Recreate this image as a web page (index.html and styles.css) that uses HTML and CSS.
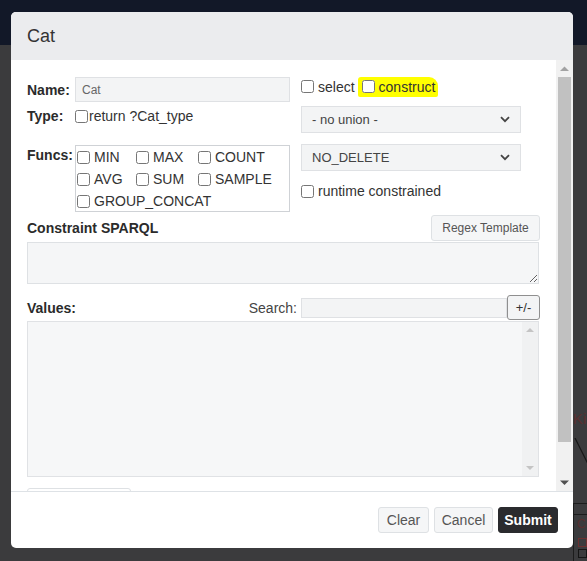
FILE: index.html
```html
<!DOCTYPE html>
<html>
<head>
<meta charset="utf-8">
<link rel="stylesheet" href="styles.css">
</head>
<body>
<div class="topbar"></div>
<div class="backdrop-bits">
  <span class="bg-text">Ki</span>
  <svg class="bg-line" width="20" height="40" viewBox="0 0 20 40"><path d="M1 0 L19 36" stroke="#151515" stroke-width="1.2" fill="none"/></svg>
  <div class="bg-table">
    <div class="bg-row"></div>
    <span class="bg-red">C</span>
    <span class="bg-sq red"></span>
    <span class="bg-sq"></span>
  </div>
</div>

<div class="modal">
  <div class="modal-header"><h2 class="title">Cat</h2></div>
  <div class="modal-body">
    <div class="body-content">
      <div class="top-grid">
        <div class="left-col">
          <div class="name-row">
            <span class="lbl">Name:</span>
            <input class="txt name-input" type="text" value="Cat">
          </div>
          <div class="type-row">
            <span class="lbl">Type:</span>
            <label class="chk tight"><input type="checkbox">return ?Cat_type</label>
          </div>
          <div class="funcs-row">
            <span class="lbl funcs-lbl">Funcs:</span>
            <div class="funcs-box">
              <label class="chk"><input type="checkbox">MIN</label>
              <label class="chk"><input type="checkbox">MAX</label>
              <label class="chk"><input type="checkbox">COUNT</label>
              <label class="chk"><input type="checkbox">AVG</label>
              <label class="chk"><input type="checkbox">SUM</label>
              <label class="chk"><input type="checkbox">SAMPLE</label>
              <label class="chk wide"><input type="checkbox">GROUP_CONCAT</label>
            </div>
          </div>
        </div>
        <div class="right-col">
          <div class="mode-row">
            <label class="chk"><input type="checkbox">select</label>
            <span class="hl"><label class="chk"><input type="checkbox">construct</label></span>
          </div>
          <select class="sel"><option>- no union -</option></select>
          <select class="sel"><option>NO_DELETE</option></select>
          <label class="chk runtime"><input type="checkbox">runtime constrained</label>
        </div>
      </div>

      <div class="section-head">
        <span class="lbl">Constraint SPARQL</span>
        <button class="btn-light regex">Regex Template</button>
      </div>
      <textarea class="sparql"></textarea>

      <div class="values-head">
        <span class="lbl">Values:</span>
        <div class="search">
          <span class="search-lbl">Search:</span>
          <input class="txt search-input" type="text">
          <button class="pm">+/-</button>
        </div>
      </div>
      <div class="values-list">
        <div class="values-items"></div>
        <div class="mini-scroll">
          <svg width="16" height="16" viewBox="0 0 16 16"><path d="M4 10h8L8 6z" fill="#c4c4c4"/></svg>
          <svg width="16" height="16" viewBox="0 0 16 16"><path d="M4 6h8L8 10z" fill="#c4c4c4"/></svg>
        </div>
      </div>
      <button class="btn-light partial">&nbsp;</button>
    </div>
    <div class="vscroll">
      <svg class="sb-btn" width="17" height="17" viewBox="0 0 17 17"><path d="M4 11h9L8.5 6.5z" fill="#a3a3a3"/></svg>
      <div class="sb-track"><div class="sb-thumb"></div></div>
      <svg class="sb-btn" width="17" height="17" viewBox="0 0 17 17"><path d="M4 6.5h9L8.5 11z" fill="#505050"/></svg>
    </div>
  </div>
  <div class="modal-footer">
    <button class="btn-light clear">Clear</button>
    <button class="btn-light cancel">Cancel</button>
    <button class="btn-dark submit">Submit</button>
  </div>
</div>
</body>
</html>
```

FILE: styles.css
```css
html, body {
  margin: 0;
  padding: 0;
}
body {
  width: 587px;
  height: 561px;
  overflow: hidden;
  background: #3b3b3d;
  font-family: "Liberation Sans", Arial, sans-serif;
  font-size: 14px;
  color: #333;
  position: relative;
}
.topbar {
  height: 45px;
  background: #121828;
}

/* page content peeking out behind the backdrop */
.backdrop-bits {
  position: absolute;
  left: 573px;
  top: 400px;
  width: 14px;
  height: 161px;
}
.bg-text {
  position: absolute;
  left: 0;
  top: 10px;
  font-size: 15px;
  color: #5a2f2f;
}
.bg-line {
  position: absolute;
  left: 1px;
  top: 38px;
}
.bg-table {
  position: absolute;
  left: 0;
  top: 103px;
  width: 14px;
  height: 58px;
  border-left: 1px solid #1c1c1c;
}
.bg-row {
  height: 10px;
  border-top: 1px solid #1c1c1c;
  border-bottom: 1px solid #1c1c1c;
}
.bg-red {
  position: absolute;
  left: 3px;
  top: 14px;
  font-size: 12px;
  color: #5a2f2f;
}
.bg-sq {
  position: absolute;
  left: 4px;
  top: 46px;
  width: 7px;
  height: 7px;
  border: 1px solid #151515;
}
.bg-sq.red {
  top: 35px;
  border-color: #6b3030;
}

/* modal */
.modal {
  position: absolute;
  left: 11px;
  top: 12px;
  width: 562px;
  height: 536px;
  background: #fff;
  border-radius: 5px;
  overflow: hidden;
  display: flex;
  flex-direction: column;
}
.modal-header {
  height: 48px;
  flex: none;
  background: #ebecee;
  display: flex;
  align-items: center;
  padding: 0 16px;
}
.title {
  margin: 0;
  font-weight: normal;
  font-size: 18px;
  color: #333;
}
.modal-body {
  flex: 1;
  min-height: 0;
  display: flex;
}
.body-content {
  flex: 1;
  min-width: 0;
  overflow: hidden;
  padding: 17px 16px 0 16px;
}
.vscroll {
  flex: none;
  width: 17px;
  background: #f1f1f1;
  display: flex;
  flex-direction: column;
}
.sb-btn {
  display: block;
  flex: none;
}
.sb-track {
  flex: 1;
}
.sb-thumb {
  height: 365px;
  margin: 0 2px;
  background: #c1c1c1;
}

.top-grid {
  display: grid;
  grid-template-columns: 263px 219px;
  column-gap: 11px;
}
.lbl {
  font-weight: bold;
  color: #2b2b2b;
  width: 48px;
  flex: none;
  white-space: nowrap;
}
.name-row {
  display: flex;
  align-items: center;
}
.txt {
  box-sizing: border-box;
  border: 1px solid #dfe1e4;
  background: #f3f4f5;
  font-family: "Liberation Sans", Arial, sans-serif;
  outline: none;
  margin: 0;
}
.name-input {
  width: 215px;
  height: 25px;
  padding: 0 6px;
  font-size: 12px;
  color: #666;
}
.type-row {
  display: flex;
  align-items: center;
  height: 16px;
  margin-top: 6px;
}
.chk {
  display: inline-flex;
  align-items: center;
  white-space: nowrap;
  color: #333;
}
.chk input {
  width: 13px;
  height: 13px;
  margin: 0 4px 0 0;
}
.chk.tight input {
  margin-right: 1px;
}
.funcs-row {
  display: flex;
  margin-top: 21px;
}
.funcs-lbl {
  padding-top: 2px;
}
.funcs-box {
  box-sizing: border-box;
  width: 215px;
  height: 67px;
  border: 1px solid #cfd2d6;
  display: grid;
  grid-template-columns: 59px 62px auto;
  grid-auto-rows: 22px;
  padding-left: 1px;
}
.funcs-box .chk.wide {
  grid-column: 1 / 4;
}

.right-col {
  display: flex;
  flex-direction: column;
  align-items: flex-start;
}
.mode-row {
  display: flex;
  align-items: center;
  height: 21px;
  margin-top: -1px;
}
.hl {
  display: inline-flex;
  align-items: center;
  background: #ffff00;
  margin-left: 3px;
  padding: 0 3px 0 4px;
  height: 20px;
  border-radius: 3px 9px 2px 2px;
}
.sel {
  appearance: none;
  -webkit-appearance: none;
  box-sizing: border-box;
  width: 220px;
  height: 27px;
  border: 1px solid #dfe1e4;
  background-color: #f3f4f5;
  background-image: url("data:image/svg+xml;utf8,<svg xmlns='http://www.w3.org/2000/svg' width='10' height='7'><path d='M1 1.2l4 4 4-4' stroke='%23444' stroke-width='1.8' fill='none'/></svg>");
  background-repeat: no-repeat;
  background-position: right 10px center;
  padding: 0 10px;
  font-family: "Liberation Sans", Arial, sans-serif;
  font-size: 13px;
  color: #444;
  border-radius: 0;
  margin: 0;
  outline: none;
}
.mode-row + .sel {
  margin-top: 9px;
}
.sel + .sel {
  margin-top: 11px;
}
.runtime {
  margin-top: 12px;
}

.section-head {
  display: flex;
  justify-content: space-between;
  align-items: center;
  margin-top: 3px;
  height: 26px;
}
.btn-light {
  box-sizing: border-box;
  background: #f5f6f7;
  border: 1px solid #dee1e4;
  border-radius: 3px;
  font-family: "Liberation Sans", Arial, sans-serif;
  color: #555;
  padding: 0;
  margin: 0;
}
.regex {
  width: 109px;
  height: 26px;
  font-size: 12px;
}
.sparql {
  display: block;
  box-sizing: border-box;
  width: 512px;
  height: 42px;
  margin: 1px 0 0 0;
  border: 1px solid #dee1e4;
  background: #f5f6f7;
  resize: vertical;
  outline: none;
}
.values-head {
  display: flex;
  justify-content: space-between;
  align-items: center;
  margin-top: 11px;
  height: 25px;
}
.search {
  display: flex;
  align-items: center;
}
.search-lbl {
  color: #444;
  margin-right: 4px;
}
.search-input {
  width: 206px;
  height: 20px;
}
.pm {
  box-sizing: border-box;
  width: 33px;
  height: 25px;
  border: 1px solid #8f8f8f;
  border-radius: 3px;
  background: #f3f4f5;
  font-family: "Liberation Sans", Arial, sans-serif;
  font-size: 13px;
  color: #333;
  padding: 0;
  margin: 0;
}
.values-list {
  box-sizing: border-box;
  width: 512px;
  height: 156px;
  margin-top: 1px;
  border: 1px solid #e0e2e5;
  background: #f6f7f8;
  display: flex;
}
.values-items {
  flex: 1;
}
.mini-scroll {
  flex: none;
  width: 16px;
  background: #f0f1f2;
  display: flex;
  flex-direction: column;
  justify-content: space-between;
}
.mini-scroll svg {
  display: block;
}
.partial {
  display: block;
  width: 104px;
  height: 26px;
  margin-top: 11px;
  background: #fff;
}

.modal-footer {
  flex: none;
  height: 56px;
  border-top: 1px solid #dee2e6;
  display: flex;
  justify-content: flex-end;
  align-items: center;
  gap: 5px;
  padding: 0 15px;
}
.clear, .cancel, .submit {
  height: 26px;
  font-size: 14px;
}
.clear { width: 51px; }
.cancel { width: 59px; }
.submit {
  width: 60px;
}
.btn-dark {
  box-sizing: border-box;
  background: #2a2b2e;
  border: 1px solid #2a2b2e;
  border-radius: 3px;
  color: #fff;
  font-weight: bold;
  font-family: "Liberation Sans", Arial, sans-serif;
  padding: 0;
  margin: 0;
}
```
